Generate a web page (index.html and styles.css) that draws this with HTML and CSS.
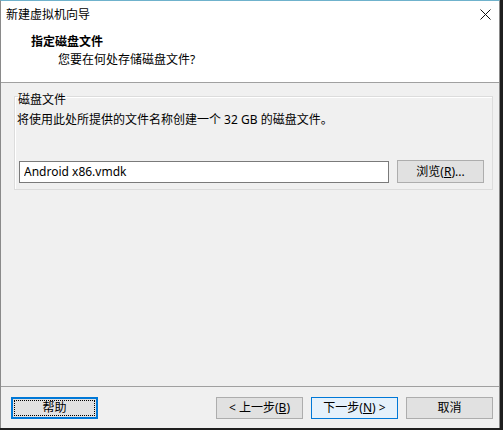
FILE: index.html
```html
<!DOCTYPE html>
<html>

<head>
  <meta charset="utf-8">
  <link rel="stylesheet" href="styles.css">
</head>

<body>
  <div class="window">
    <div class="titlebar">
      <span>新建虚拟机向导</span>
      <svg class="close" width="11" height="11" viewBox="0 0 11 11">
        <path d="M0.5 0.5 L10.5 10.5 M10.5 0.5 L0.5 10.5" stroke="#111" stroke-width="1" fill="none" />
      </svg>
    </div>

    <div class="header">
      <div class="heading">指定磁盘文件</div>
      <div class="subheading">您要在何处存储磁盘文件?</div>
    </div>

    <div class="content">
      <fieldset class="group">
        <legend>磁盘文件</legend>
        <div class="desc">将使用此处所提供的文件名称创建一个 32 GB 的磁盘文件。</div>
        <div class="file-row">
          <input class="file-input" type="text" value="Android x86.vmdk">
          <button class="btn browse">浏览(<u>R</u>)...</button>
        </div>
      </fieldset>
    </div>

    <div class="footer">
      <button class="btn focused"><span class="focus-ring">帮助</span></button>
      <div class="nav">
        <button class="btn">&lt; 上一步(<u>B</u>)</button>
        <button class="btn default">下一步(<u>N</u>) &gt;</button>
        <button class="btn">取消</button>
      </div>
    </div>
  </div>
</body>

</html>
```

FILE: styles.css
```css
body {
  margin: 0;
  background-color: #1f1f1f;
  font-family: "Noto Sans", "Noto Sans CJK SC", sans-serif;
  font-size: 12px;
  color: #000000;
}

.window {
  width: 500px;
  height: 428px;
  box-sizing: border-box;
  border-top: 1px solid #6fb2cc;
  border-left: 1px solid #8a8a8a;
  border-right: 1px solid #8a8a8a;
  background-color: #f0f0f0;
  display: flex;
  flex-direction: column;
}

.titlebar {
  height: 27px;
  background-color: #ffffff;
  display: flex;
  align-items: center;
  justify-content: space-between;
  padding: 0 8px 0 5px;
  line-height: 16px;
}

.close {
  display: block;
}

.header {
  height: 55px;
  box-sizing: border-box;
  background-color: #ffffff;
  border-bottom: 1px solid #a0a0a0;
  padding: 5px 0 0 30px;
  line-height: 18px;
}

.heading {
  font-weight: bold;
}

.subheading {
  margin-left: 27px;
}

.content {
  flex: 1;
  padding: 1px 7px 0 13px;
}

.group {
  margin: 0;
  padding: 0 8px 6px 2px;
  border: 1px solid #dcdcdc;
  box-shadow: inset 1px 1px 0 #ffffff;
}

.group legend {
  padding: 8px 1px 0 0;
  margin-left: 1px;
  line-height: 16px;
}

.desc {
  margin-top: 4px;
  line-height: 16px;
}

.file-row {
  display: flex;
  align-items: center;
  margin-top: 32px;
  margin-left: 2px;
}

.file-input {
  width: 370px;
  height: 22px;
  box-sizing: border-box;
  border: 1px solid #7a7a7a;
  padding: 0 4px;
  font: inherit;
  background-color: #ffffff;
  outline: none;
}

.btn {
  width: 87px;
  height: 23px;
  box-sizing: border-box;
  border: 1px solid #adadad;
  background-color: #e1e1e1;
  font: inherit;
  color: #000000;
  padding: 0;
  line-height: 16px;
}

.browse {
  margin-left: 8px;
  width: 87px;
}

.footer {
  border-top: 1px solid #a0a0a0;
  padding: 10px 6px 9px 10px;
  display: flex;
  justify-content: space-between;
}

.footer .btn {
  height: 22px;
}

.nav {
  display: flex;
  gap: 8px;
}

.btn.default {
  border-color: #0078d7;
  background-color: #e5f1fb;
}

.btn.focused {
  border: 2px solid #0078d7;
  padding: 1px;
}

.focus-ring {
  display: block;
  height: 100%;
  box-sizing: border-box;
  border: 1px dotted #000000;
  line-height: 14px;
}
```
